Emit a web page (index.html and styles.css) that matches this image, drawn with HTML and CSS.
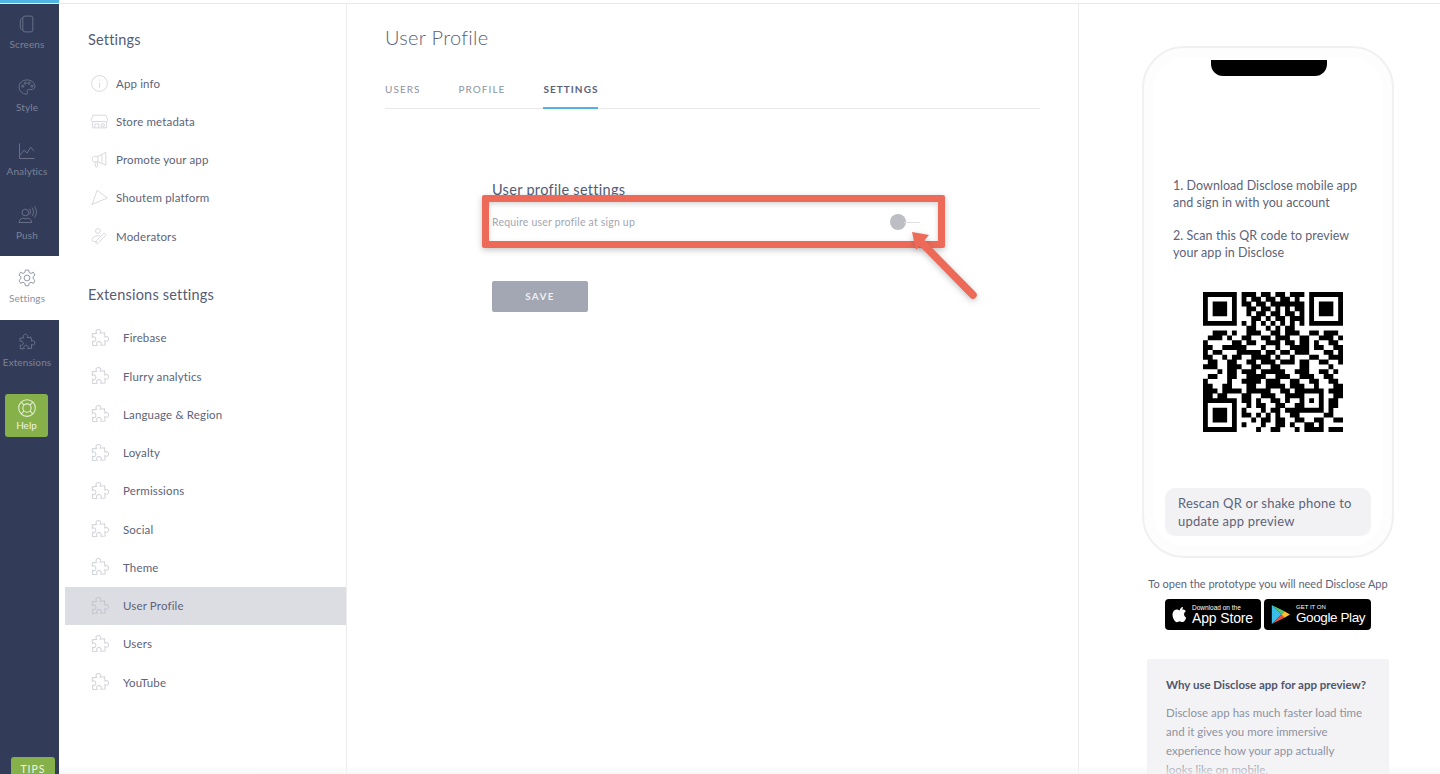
FILE: index.html
```html
<!DOCTYPE html>
<html lang="en">
<head>
<meta charset="utf-8">
<title>User Profile settings</title>
<link rel="stylesheet" href="styles.css">
</head>
<body>
<svg class="defs" width="0" height="0" aria-hidden="true">
  <symbol id="puzzle" viewBox="0 0 24 24">
    <path d="M3.500 7.500l4.800-.6c-.9-1-1-2.100-.4-3.100.9-1.400 3.100-1.600 4.300-.4 1 1 .9 2.300 0 3.300l4.800-.4.300 4.700c1-.8 2.300-.9 3.300 0 1.200 1.100 1 3.300-.3 4.200-1 .6-2.100.5-3-.3l.2 4.700-4.600.3c.7-1 .8-2.200-.1-3.200-1.200-1.200-3.300-1-4.200.3-.6 1-.5 2.100.2 3l-4.800.2-.1-4.600c1 .6 2.200.4 3-.5 1-1.200.7-3.200-.6-4-1-.6-1.900-.4-2.600.2z"/>
  </symbol>
</svg>

<div class="topbar"><span class="topbar-accent"></span></div>

<div class="app">
  <nav class="rail">
    <a class="rail-item rail-item-first">
      <svg viewBox="0 0 24 24"><rect x="7" y="2.500" width="12" height="19" rx="2.500"/><path d="M7 5c-2 .3-3 1.200-3 2.500v9c0 1.300 1 2.200 3 2.500"/></svg>
      <span>Screens</span>
    </a>
    <a class="rail-item">
      <svg viewBox="0 0 24 24"><path d="M12 3.500c-5.500 0-9.500 3.700-9.500 8.300 0 4.800 4 8.700 8.800 8.700 1.800 0 1.700-1.500 1-2.600-.8-1.300 0-2.800 1.700-2.800h2.800c2.800 0 4.700-1.500 4.700-3.800 0-4.500-4.500-7.800-9.500-7.800z"/><circle cx="7" cy="11" r="1.300"/><circle cx="10" cy="7.500" r="1.300"/><circle cx="14.500" cy="7.500" r="1.300"/><circle cx="18" cy="11" r="1.300"/></svg>
      <span>Style</span>
    </a>
    <a class="rail-item">
      <svg viewBox="0 0 24 24"><path d="M3 3v18h18"/><path d="M3.500 17l5-6 3.500 3.500 4.500-7 4 4.500"/></svg>
      <span>Analytics</span>
    </a>
    <a class="rail-item">
      <svg viewBox="0 0 24 24"><circle cx="10" cy="9" r="4"/><path d="M2.500 21c0-3 1.500-4.500 4.500-5.300l3 1 3-1c3 .8 4.500 2.300 4.500 5.300z"/><path d="M15 4.500c1.500 1.500 1.500 5.500 0 7M18 3c2.300 2.500 2.300 8 0 10.500M21 1.500c3 3.500 3 10 0 13.500"/></svg>
      <span>Push</span>
    </a>
    <a class="rail-item rail-item-active">
      <svg viewBox="0 0 24 24"><circle cx="12" cy="12" r="3.500"/><path d="M10 2.500h4l.6 3 2.300 1 2.700-1.500 2 3.400-2.300 2 .1 2.600 2.200 2-2 3.400-2.800-1.400-2.200 1.300-.6 3h-4l-.6-3-2.200-1.300-2.800 1.400-2-3.400 2.200-2 .1-2.600-2.300-2 2-3.400 2.700 1.500 2.300-1z"/></svg>
      <span>Settings</span>
    </a>
    <a class="rail-item rail-item-ext">
      <svg viewBox="0 0 24 24"><use href="#puzzle"/></svg>
      <span>Extensions</span>
    </a>
    <a class="rail-help">
      <svg viewBox="0 0 24 24"><circle cx="12" cy="12" r="10"/><circle cx="12" cy="12" r="5"/><path d="M5 5l3.500 3.500M19 5l-3.500 3.500M5 19l3.500-3.500M19 19l-3.500-3.500"/></svg>
      <span>Help</span>
    </a>
    <a class="rail-tips">TIPS</a>
  </nav>

  <aside class="menu">
    <h2 class="menu-title">Settings</h2>
    <ul class="menu-list">
      <li class="menu-item">
        <svg class="menu-icon" viewBox="0 0 24 24"><circle cx="12" cy="12" r="10"/><path d="M12 11v6M12 7v1.500"/></svg>App info
      </li>
      <li class="menu-item">
        <svg class="menu-icon" viewBox="0 0 24 24"><path d="M4 4h16l2.500 6c0 1.500-1 2-2 2H3.500c-1 0-2-.5-2-2zM3 12v8h18v-8M6 20v-5h5v5M14 15h4v3h-4z"/></svg>Store metadata
      </li>
      <li class="menu-item">
        <svg class="menu-icon" viewBox="0 0 24 24"><path d="M20 3v16L10 15H5.500C4 15 3 14 3 12.500v-2C3 9 4 8 5.500 8H10zM10 8v7M15 6v10M6 15l1 6c.2 1.300 2.800 1 2.600-.5L9 15.500"/></svg>Promote your app
      </li>
      <li class="menu-item">
        <svg class="menu-icon" viewBox="0 0 24 24"><path d="M9 3l13 9.500L2.500 21z"/></svg>Shoutem platform
      </li>
      <li class="menu-item">
        <svg class="menu-icon" viewBox="0 0 24 24"><circle cx="10" cy="5" r="3"/><path d="M3.500 14c1.500-2 4-3 7-3 .8 0 1.500.1 2 .3M3.500 14c-1.500 2-1 4 1 4.200h3M9 21c-1 .5-1.700-.2-1.500-1l.8-3L18 7.500l2.500 2.500L11 19.500z"/></svg>Moderators
      </li>
    </ul>

    <h2 class="menu-title menu-title-second">Extensions settings</h2>
    <ul class="menu-list">
      <li class="menu-item menu-item-ext"><svg class="menu-icon puzzle" viewBox="0 0 24 24"><use href="#puzzle"/></svg>Firebase</li>
      <li class="menu-item menu-item-ext"><svg class="menu-icon puzzle" viewBox="0 0 24 24"><use href="#puzzle"/></svg>Flurry analytics</li>
      <li class="menu-item menu-item-ext"><svg class="menu-icon puzzle" viewBox="0 0 24 24"><use href="#puzzle"/></svg>Language &amp; Region</li>
      <li class="menu-item menu-item-ext"><svg class="menu-icon puzzle" viewBox="0 0 24 24"><use href="#puzzle"/></svg>Loyalty</li>
      <li class="menu-item menu-item-ext"><svg class="menu-icon puzzle" viewBox="0 0 24 24"><use href="#puzzle"/></svg>Permissions</li>
      <li class="menu-item menu-item-ext"><svg class="menu-icon puzzle" viewBox="0 0 24 24"><use href="#puzzle"/></svg>Social</li>
      <li class="menu-item menu-item-ext"><svg class="menu-icon puzzle" viewBox="0 0 24 24"><use href="#puzzle"/></svg>Theme</li>
      <li class="menu-item menu-item-ext menu-item-selected"><svg class="menu-icon puzzle" viewBox="0 0 24 24"><use href="#puzzle"/></svg>User Profile</li>
      <li class="menu-item menu-item-ext"><svg class="menu-icon puzzle" viewBox="0 0 24 24"><use href="#puzzle"/></svg>Users</li>
      <li class="menu-item menu-item-ext"><svg class="menu-icon puzzle" viewBox="0 0 24 24"><use href="#puzzle"/></svg>YouTube</li>
    </ul>
  </aside>

  <main class="main">
    <h1 class="page-title">User Profile</h1>
    <div class="tabs">
      <a class="tab">USERS</a>
      <a class="tab">PROFILE</a>
      <a class="tab tab-active">SETTINGS</a>
    </div>
    <form class="form">
      <h3 class="form-title">User profile settings</h3>
      <div class="form-row">
        <span class="form-label">Require user profile at sign up</span>
        <span class="toggle"><span class="toggle-knob"></span></span>
      </div>
      <button type="button" class="save">SAVE</button>
    </form>
    <div class="callout"></div>
    <svg class="callout-arrow" viewBox="0 0 90 80">
      <path d="M83 67L30 13"/>
      <path class="callout-head" d="M22 4L39 7 26 22z"/>
    </svg>
  </main>

  <section class="preview">
    <div class="phone">
      <div class="notch"></div>
      <p class="step">1. Download Disclose mobile app<br>and sign in with you account</p>
      <p class="step">2. Scan this QR code to preview<br>your app in Disclose</p>
      <svg class="qr" viewBox="0 0 29 29" aria-label="QR code">
        <path d="M0 .5H7M8 .5H11M12 .5H14M15 .5H17M18 .5H21M22 .5H29
        M0 1.500H1M6 1.500H7M8 1.500H9M10 1.500H12M13 1.500H15M16 1.500H18M19 1.500H20M22 1.500H23M28 1.500H29
        M0 2.500H1M2 2.500H5M6 2.500H7M8 2.500H10M11 2.500H13M14 2.500H21M22 2.500H23M24 2.500H27M28 2.500H29
        M0 3.500H1M2 3.500H5M6 3.500H7M9 3.500H11M12 3.500H14M15 3.500H16M17 3.500H18M19 3.500H21M22 3.500H23M24 3.500H27M28 3.500H29
        M0 4.500H1M2 4.500H5M6 4.500H7M9 4.500H10M11 4.500H13M14 4.500H16M17 4.500H19M20 4.500H21M22 4.500H23M24 4.500H27M28 4.500H29
        M0 5.500H1M6 5.500H7M10 5.500H12M13 5.500H14M15 5.500H17M18 5.500H21M22 5.500H23M28 5.500H29
        M0 6.500H7M8 6.500H9M10 6.500H11M12 6.500H13M14 6.500H15M16 6.500H17M18 6.500H19M20 6.500H21M22 6.500H29
        M9 7.500H11M13 7.500H14M15 7.500H16M17 7.500H19
        M2 8.500H5M6 8.500H7M9 8.500H12M14 8.500H16M17 8.500H20M22 8.500H24M25 8.500H28
        M1 9.500H4M5 9.500H6M8 9.500H10M12 9.500H14M15 9.500H18M20 9.500H22M24 9.500H27M28 9.500H29
        M0 10.500H1M6 10.500H8M9 10.500H11M13 10.500H16M17 10.500H19M20 10.500H22M23 10.500H24M26 10.500H28
        M0 11.500H2M4 11.500H9M12 11.500H13M15 11.500H16M18 11.500H22M23 11.500H25M27 11.500H29
        M0 12.500H1M2 12.500H4M7 12.500H12M13 12.500H15M16 12.500H18M19 12.500H22M25 12.500H27M28 12.500H29
        M0 13.500H2M4 13.500H5M6 13.500H8M10 13.500H14M15 13.500H16M18 13.500H19M22 13.500H24M26 13.500H29
        M1 14.500H3M5 14.500H7M9 14.500H11M12 14.500H15M16 14.500H19M20 14.500H22M24 14.500H26M28 14.500H29
        M0 15.500H3M5 15.500H8M10 15.500H12M14 15.500H16M20 15.500H22M26 15.500H27
        M3 16.500H4M5 16.500H7M8 16.500H11M12 16.500H17M19 16.500H22M24 16.500H26M27 16.500H28
        M1 17.500H3M5 17.500H7M9 17.500H13M15 17.500H18M20 17.500H23M25 17.500H27
        M0 18.500H1M5 18.500H6M8 18.500H12M13 18.500H16M18 18.500H20M22 18.500H24M26 18.500H28
        M0 19.500H2M4 19.500H6M9 19.500H11M13 19.500H17M18 19.500H21M23 19.500H24M27 19.500H29
        M0 20.500H3M4 20.500H8M9 20.500H14M16 20.500H18M19 20.500H25M26 20.500H29
        M0 21.500H2M3 21.500H5M8 21.500H10M12 21.500H15M17 21.500H21M24 21.500H25M27 21.500H29
        M0 22.500H7M8 22.500H10M11 22.500H12M14 22.500H16M17 22.500H18M20 22.500H21M22 22.500H23M24 22.500H25M26 22.500H28
        M0 23.500H1M6 23.500H7M9 23.500H10M11 23.500H13M15 23.500H17M19 23.500H21M24 23.500H25M26 23.500H28
        M0 24.500H1M2 24.500H5M6 24.500H7M8 24.500H9M12 24.500H13M14 24.500H16M17 24.500H25M26 24.500H27
        M0 25.500H1M2 25.500H5M6 25.500H7M8 25.500H10M11 25.500H12M13 25.500H14M15 25.500H16M18 25.500H20M25 25.500H27
        M0 26.500H1M2 26.500H5M6 26.500H7M10 26.500H11M12 26.500H14M15 26.500H17M19 26.500H21M23 26.500H25M27 26.500H29
        M0 27.500H1M6 27.500H7M8 27.500H9M12 27.500H13M15 27.500H17M18 27.500H19M21 27.500H23M24 27.500H25
        M0 28.500H7M11 28.500H12M14 28.500H16M19 28.500H20M21 28.500H25M26 28.500H29"/>
      </svg>
      <div class="rescan">Rescan QR or shake phone to<br>update app preview</div>
    </div>
    <p class="open-note">To open the prototype you will need Disclose App</p>
    <div class="stores">
      <a class="store store-apple">
        <svg class="store-logo" viewBox="0 0 24 24"><path d="M18.700 19.500c-.9 1.300-1.900 2.600-3.400 2.600-1.500 0-2-.9-3.700-.9s-2.300.9-3.700 1c-1.500.1-2.600-1.400-3.500-2.700-1.900-2.800-3.400-7.800-1.400-11.300 1-1.700 2.800-2.800 4.700-2.800 1.500 0 2.900 1 3.800 1 .9 0 2.500-1.200 4.300-1 .7 0 2.700.3 4 2.200-.1.100-2.400 1.400-2.400 4.200 0 3.300 2.900 4.400 2.900 4.400 0 .1-.5 1.600-1.600 3.300zM13 3.500c.7-.9 1.900-1.500 2.900-1.500.1 1.200-.4 2.400-1.100 3.300-.7.8-1.900 1.500-3 1.400-.2-1.200.4-2.400 1.200-3.200z"/></svg>
        <span class="store-text"><small class="store-small">Download on the</small><b class="store-big">App Store</b></span>
      </a>
      <a class="store store-google">
        <svg class="store-logo-play" viewBox="0 0 24 26">
          <path fill="#3bbdea" d="M1 1v24l12-12z"/>
          <path fill="#5bc36f" d="M1 1l16 8-4 4z"/>
          <path fill="#e8503f" d="M1 25l16-8-4-4z"/>
          <path fill="#f9c22e" d="M17 9l7 4-7 4-4-4z"/>
        </svg>
        <span class="store-text"><small class="store-small store-small-caps">GET IT ON</small><b class="store-big store-big-tight">Google Play</b></span>
      </a>
    </div>
    <div class="why">
      <h4 class="why-title">Why use Disclose app for app preview?</h4>
      <p class="why-text">Disclose app has much faster load time<br>and it gives you more immersive<br>experience how your app actually<br>looks like on mobile.</p>
    </div>
  </section>
</div>
<div class="fade"></div>
</body>
</html>
```
FILE: styles.css
```css
* { box-sizing: border-box; }
html, body { margin: 0; padding: 0; height: 100%; overflow: hidden; background: #fff; }
body { font-family: "Lato", "Open Sans", sans-serif; color: #5b6178; position: relative; }
h1, h2, h3, h4, p, ul { margin: 0; padding: 0; font-weight: 400; }
ul { list-style: none; }
.defs { position: absolute; }

.topbar { height: 4px; border-bottom: 1px solid #e9e9ec; }
.topbar-accent { display: block; width: 59px; height: 3px; background: #4fb3e3; }

.app { display: flex; height: 770px; }

/* icon rail */
.rail { width: 59px; flex: none; background: #323c58; display: flex; flex-direction: column; align-items: stretch; }
.rail-item { height: 64px; flex: none; display: flex; flex-direction: column; align-items: center; color: #7b8298; font-size: 10px; letter-spacing: .1px; line-height: 12px; padding: 13px 5px 0 0; }
.rail-item-first { height: 60px; padding-top: 10px; }
.rail-item-ext { padding-top: 12px; }
.rail-item svg { width: 20px; height: 20px; fill: none; stroke: #6d758c; stroke-width: 1.100; margin-bottom: 4px; }
.rail-item-active { background: #fff; color: #8d90a0; padding-top: 12px; }
.rail-item-active svg { stroke: #8b8e9e; }
.rail-help { width: 43px; height: 43px; margin: 10px 0 0 5px; flex: none; background: #85b04a; border-radius: 3px; color: #eef4e2; display: flex; flex-direction: column; align-items: center; font-size: 10px; line-height: 12px; padding-top: 4px; }
.rail-help svg { width: 20px; height: 20px; fill: none; stroke: #e6eed6; stroke-width: 1.300; margin-bottom: 1px; }
.rail-tips { margin: auto 0 0 11px; width: 44px; height: 17px; flex: none; background: #85b04a; color: #f0f5e4; border-radius: 3px 3px 0 0; font-size: 10.500px; letter-spacing: 1px; text-align: center; line-height: 25px; overflow: hidden; }

/* settings menu */
.menu { width: 288px; flex: none; border-right: 1px solid #ececef; padding: 24px 0 0 6px; }
.menu-title { font-size: 14.500px; line-height: 24px; padding-left: 23px; color: #555c73; letter-spacing: .2px; }
.menu-title-second { margin-top: 27.500px; }
.menu-list { margin-top: 12px; }
.menu-item { height: 38.250px; display: flex; align-items: center; font-size: 11.500px; letter-spacing: .15px; color: #5d6379; padding-left: 25px; }
.menu-icon { width: 19px; height: 19px; fill: none; stroke: #d2d3d9; stroke-width: 1.100; margin-right: 7px; flex: none; }
.puzzle { width: 22px; height: 22px; margin-right: 12px; margin-left: -1px; }
.menu-item-selected { background: #dcdde3; }
.menu-item-selected .puzzle { stroke: #c4c5cd; }

/* main */
.main { width: 732px; flex: none; padding: 20px 38px 0; border-right: 1px solid #ececef; position: relative; }
.page-title { font-size: 20px; line-height: 26px; color: #5b6278; font-weight: 300; letter-spacing: .3px; }
.tabs { margin-top: 20px; height: 39px; display: flex; gap: 38px; border-bottom: 1px solid #e9e9ec; }
.tab { font-size: 10px; letter-spacing: 1.050px; line-height: 38px; color: #8e92a2; height: 39px; }
.tab-active { color: #5b6178; font-weight: 700; border-bottom: 2px solid #4fb3e3; }
.form { margin: 71px 0 0 107px; width: 428px; }
.form-title { font-size: 14.500px; line-height: 20px; color: #555c73; letter-spacing: .3px; }
.form-row { margin-top: 9px; height: 26px; display: flex; align-items: center; justify-content: space-between; }
.form-label { font-size: 10.500px; color: #a2a5b3; letter-spacing: .2px; }
.toggle { width: 30px; height: 16px; position: relative; display: block; }
.toggle::after { content: ""; position: absolute; left: 14px; right: 0; top: 8px; height: 1px; background: #dedfe3; }
.toggle-knob { position: absolute; left: 0; top: 0; width: 16px; height: 16px; border-radius: 50%; background: #bdbec3; }
.save { display: block; margin-top: 46px; width: 96px; height: 31px; border: 0; border-radius: 2px; background: #a3a6b3; color: #eeeff2; font: 700 10px "Lato", sans-serif; letter-spacing: 1.300px; padding-bottom: 2px; }
.callout { position: absolute; left: 135px; top: 191px; width: 463px; height: 53px; border: 7px solid #ee6a58; border-radius: 2px; box-shadow: 0 2px 6px rgba(60, 60, 70, .3), inset 0 2px 5px rgba(60, 60, 70, .22); }
.callout-arrow { position: absolute; left: 543px; top: 224px; width: 90px; height: 80px; fill: none; stroke: #ee6a58; stroke-width: 7.500; stroke-linecap: round; filter: drop-shadow(0 2px 3px rgba(60, 60, 70, .3)); overflow: visible; }
.callout-head { fill: #ee6a58; stroke: none; }

/* preview */
.preview { flex: 1; padding: 42px 0 0 63px; }
.phone { width: 252px; height: 512px; border: 2px solid #f0f0f3; border-radius: 42px; position: relative; padding: 128.500px 0 0 29px; box-shadow: inset 0 0 0 10px #fdfdfe; }
.notch { position: absolute; left: 67px; top: 12px; width: 116px; height: 16px; background: #000; border-radius: 0 0 12px 12px; }
.step { font-size: 12.500px; line-height: 17px; color: #5d6379; margin-bottom: 16px; letter-spacing: .05px; white-space: nowrap; }
.qr { display: block; width: 140px; height: 140px; margin: 31px 0 0 30px; fill: none; stroke: #000; stroke-width: 1.020; }
.rescan { margin: 56px 0 0 -8px; width: 206px; height: 48px; background: #f2f2f5; border-radius: 10px; padding: 6px 0 0 13px; font-size: 13px; line-height: 18px; color: #5d6379; letter-spacing: .22px; white-space: nowrap; }
.open-note { margin-top: 17px; width: 252px; text-align: center; font-size: 11px; line-height: 18px; color: #5d6379; white-space: nowrap; }
.stores { margin: 6px 0 0 23px; display: flex; gap: 3px; }
.store { height: 31px; background: #000; border-radius: 4px; color: #fff; display: flex; align-items: center; font-family: "Liberation Sans", sans-serif; flex: none; }
.store-apple { width: 96px; padding-left: 6px; }
.store-google { width: 107px; padding-left: 7px; }
.store-logo { width: 18px; height: 19px; fill: #fff; margin-right: 3px; flex: none; }
.store-logo-play { width: 19px; height: 21px; margin-right: 6px; flex: none; }
.store-text { display: flex; flex-direction: column; white-space: nowrap; }
.store-small { font-size: 6.500px; line-height: 7px; }
.store-small-caps { font-size: 6px; }
.store-big { font-size: 14px; line-height: 14px; font-weight: 400; letter-spacing: -.15px; }
.store-big-tight { font-size: 13.500px; letter-spacing: -.4px; }
.why { margin: 29px 0 0 5px; width: 242px; height: 140px; background: #f3f3f5; border-radius: 3px; padding: 17px 0 0 19px; }
.why-title { font-size: 11.500px; font-weight: 700; line-height: 18px; color: #4f566d; white-space: nowrap; }
.why-text { margin-top: 9px; font-size: 11.500px; line-height: 19px; color: #8e92a2; white-space: nowrap; }
.fade { position: absolute; left: 59px; right: 0; bottom: 0; height: 10px; background: linear-gradient(rgba(245, 245, 247, 0), rgba(245, 245, 247, .7)); }
```
